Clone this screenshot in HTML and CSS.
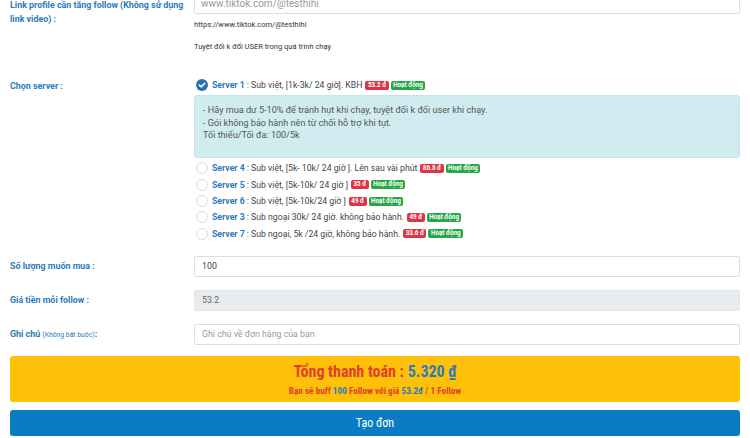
FILE: index.html
```html
<!DOCTYPE html>
<html lang="vi">
<head>
<meta charset="utf-8">
<link rel="stylesheet" href="styles.css">
</head>
<body>
<div class="page">
  <div class="row row-link">
    <label class="lbl">Link profile cần tăng follow (Không sử dụng link video) :</label>
    <div class="field">
      <input class="inp inp-link" type="text" placeholder="www.tiktok.com/@testhihi">
      <div class="help help-1">https://www.tiktok.com/@testhihi</div>
      <div class="help help-2">Tuyệt đối k đổi USER trong quá trình chạy</div>
    </div>
  </div>

  <div class="row row-server">
    <label class="lbl lbl-server">Chọn server :</label>
    <div class="field">
      <div class="opt">
        <span class="radio checked"><svg viewBox="0 0 12 12" width="12" height="12"><circle cx="6" cy="6" r="6" fill="#2a6fb0"/><path d="M3.3 6.1 L5.2 7.9 L8.8 4.3" fill="none" stroke="#fff" stroke-width="1.5" stroke-linecap="round" stroke-linejoin="round"/></svg></span>
        <span class="sv">Server 1</span><span class="desc"> : Sub việt, [1k-3k/ 24 giờ]. KBH</span>
        <span class="badge red">53.2 đ</span><span class="badge green">Hoạt động</span>
      </div>
      <div class="info">
        <div>- Hãy mua dư 5-10% để tránh hụt khi chạy, tuyệt đối k đổi user khi chạy.</div>
        <div>- Gói không bảo hành nên từ chối hỗ trợ khi tụt.</div>
        <div>Tối thiểu/Tối đa: 100/5k</div>
      </div>
      <div class="opt">
        <span class="radio"></span>
        <span class="sv">Server 4</span><span class="desc"> : Sub việt, [5k- 10k/ 24 giờ ]. Lên sau vài phút</span>
        <span class="badge red">86.8 đ</span><span class="badge green">Hoạt động</span>
      </div>
      <div class="opt">
        <span class="radio"></span>
        <span class="sv">Server 5</span><span class="desc"> : Sub việt, [5k-10k/ 24 giờ ]</span>
        <span class="badge red">35 đ</span><span class="badge green">Hoạt động</span>
      </div>
      <div class="opt">
        <span class="radio"></span>
        <span class="sv">Server 6</span><span class="desc"> : Sub việt, [5k-10k/24 giờ ]</span>
        <span class="badge red">49 đ</span><span class="badge green">Hoạt động</span>
      </div>
      <div class="opt">
        <span class="radio"></span>
        <span class="sv">Server 3</span><span class="desc"> : Sub ngoại 30k/ 24 giờ. không bảo hành.</span>
        <span class="badge red">49 đ</span><span class="badge green">Hoạt động</span>
      </div>
      <div class="opt">
        <span class="radio"></span>
        <span class="sv">Server 7</span><span class="desc"> : Sub ngoại, 5k /24 giờ, không bảo hành.</span>
        <span class="badge red">33.6 đ</span><span class="badge green">Hoạt động</span>
      </div>
    </div>
  </div>

  <div class="row row-input">
    <label class="lbl">Số lượng muốn mua :</label>
    <div class="field"><input class="inp" type="text" value="100"></div>
  </div>
  <div class="row row-input">
    <label class="lbl">Giá tiền mỗi follow :</label>
    <div class="field"><input class="inp" type="text" value="53.2" disabled></div>
  </div>
  <div class="row row-input">
    <label class="lbl">Ghi chú <small class="opt-note">(Không bắt buộc)</small>:</label>
    <div class="field"><input class="inp" type="text" placeholder="Ghi chú về đơn hàng của bạn"></div>
  </div>

  <div class="total">
    <div class="total-title">Tổng thanh toán : <span class="blue">5.320 ₫</span></div>
    <div class="total-sub">Bạn sẽ buff <span class="blue">100</span> Follow với giá <span class="blue">53.2đ</span> / 1 Follow</div>
  </div>
  <button class="submit" type="button">Tạo đơn</button>
</div>
</body>
</html>
```

FILE: styles.css
```css
* { box-sizing: border-box; }
html, body { margin: 0; padding: 0; background: #fff; }
body {
  font-family: Roboto, "Liberation Sans", sans-serif;
  color: #333;
  overflow: hidden;
}
.page {
  padding: 0 10px;
  margin-top: -7px;
}
.row {
  display: grid;
  grid-template-columns: 184px 1fr;
}
.lbl {
  color: #2b7bb9;
  font-weight: 700;
  font-size: 8.9px;
  line-height: 14px;
}
.row-link .lbl { padding-top: 5px; }
.field { min-width: 0; }
.inp {
  display: block;
  width: 100%;
  height: 21px;
  border: 1px solid #dedede;
  border-radius: 2px;
  padding: 0 7px;
  font-family: Roboto, "Liberation Sans", sans-serif;
  font-size: 8.8px;
  color: #444;
  background: #fff;
  outline: none;
}
.inp-link { font-size: 10px; padding: 0 6px; }
.inp::placeholder { color: #9a9a9a; }
.inp:disabled { background: #e9ecef; color: #666; border-color: #e2e4e6; }
.help {
  font-size: 7.5px;
  line-height: 12px;
  color: #333;
}
.help-1 { margin-top: 5px; }
.help-2 { margin-top: 10px; }

.row-server { margin-top: 24px; }
.lbl-server { padding-top: 1px; line-height: 16px; }
.opt {
  display: flex;
  align-items: center;
  height: 16.3px;
  font-size: 8.7px;
  white-space: nowrap;
}
.radio {
  display: inline-block;
  width: 12px;
  height: 12px;
  border-radius: 50%;
  border: 1px solid #dcdcdc;
  margin: 0 4px 0 2px;
  flex: none;
}
.radio.checked { border: none; }
.radio svg { display: block; }
.sv { color: #2b7bb9; font-weight: 700; }
.desc { color: #444; white-space: pre; }
.badge {
  display: inline-block;
  color: #fff;
  font-size: 6.3px;
  font-weight: 700;
  line-height: 9px;
  padding: 0 2.5px;
  border-radius: 2px;
  margin-left: 2px;
}
.desc + .badge { margin-left: 3px; }
.badge.red { background: #dc3545; }
.badge.green { background: #28a745; }
.info {
  background: #d1ecf1;
  border: 1px solid #c4e5eb;
  border-radius: 3px;
  height: 63px;
  margin: 2px 0 2px;
  padding: 8px 8px;
  font-size: 9.1px;
  line-height: 12.3px;
  color: #555;
}

.row-input { margin-top: 13px; }
.row-server + .row-input { margin-top: 14px; }
.row-input .lbl { line-height: 21px; }
.opt-note { font-size: 6.8px; font-weight: 400; }

.total {
  margin-top: 10px;
  background: #ffc107;
  border-radius: 3px;
  height: 46px;
  text-align: center;
  padding-top: 6px;
  font-family: "Roboto Condensed", "Liberation Sans Narrow", "DejaVu Sans", sans-serif;
  font-stretch: condensed;
  color: #e0402a;
}
.total-title {
  font-size: 16px;
  font-weight: 700;
  line-height: 20px;
}
.total-sub {
  font-size: 9.2px;
  font-weight: 700;
  line-height: 14px;
  margin-top: 2px;
}
.blue { color: #2b7bb9; }
.submit {
  display: block;
  width: 100%;
  margin-top: 8px;
  height: 26px;
  border: none;
  border-radius: 3px;
  background: #0a7cc4;
  color: #fff;
  font-family: "Roboto Condensed", "Liberation Sans Narrow", "DejaVu Sans", sans-serif;
  font-stretch: condensed;
  font-size: 12px;
}
```
